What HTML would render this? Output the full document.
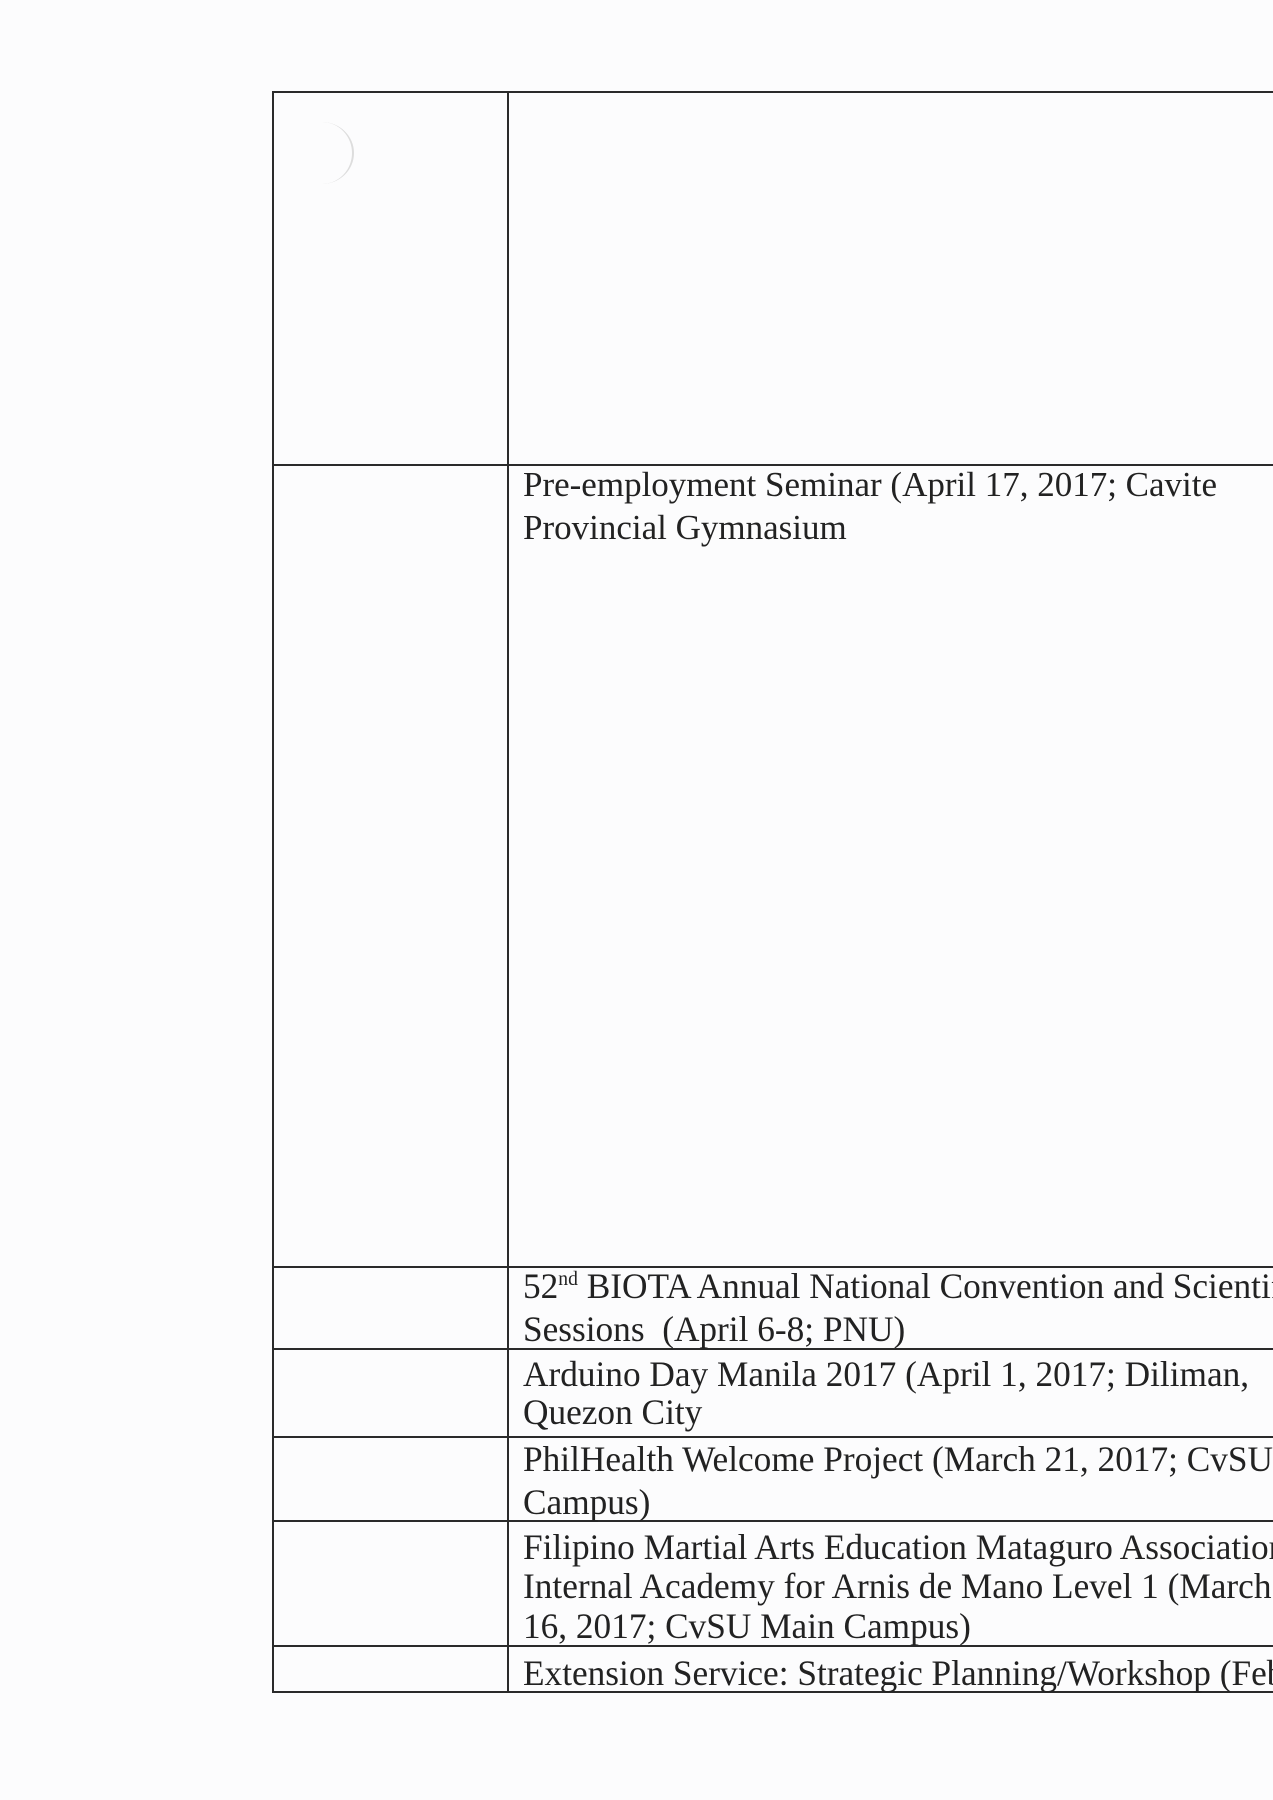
<!DOCTYPE html>
<html><head><meta charset="utf-8"><style>
html,body{margin:0;padding:0;width:1273px;height:1800px;background:#fcfcfd;overflow:hidden;position:relative;font-family:"Liberation Serif",serif;color:#222;}
.h{position:absolute;left:272px;width:1010px;height:2px;background:#2a2a2a;}
.v{position:absolute;width:2px;background:#2a2a2a;}
.t{position:absolute;left:523px;font-size:35px;line-height:40px;white-space:nowrap;}
.c{font-size:36px;transform-origin:left center;transform:scaleX(0.98);}
sup{font-size:20px;line-height:0;}
</style></head><body>
<div class="h" style="top:91px"></div>
<div class="h" style="top:464px"></div>
<div class="h" style="top:1266px"></div>
<div class="h" style="top:1348px"></div>
<div class="h" style="top:1436px"></div>
<div class="h" style="top:1520px"></div>
<div class="h" style="top:1645px"></div>
<div class="h" style="top:1691px"></div>
<div class="v" style="left:272px;top:91px;height:1602px"></div>
<div class="v" style="left:507px;top:91px;height:1602px"></div>
<div style="position:absolute;left:290px;top:122px;width:62px;height:62px;border-radius:50%;border-right:2px solid #ddd;"></div>

<div class="t" style="top:465px">Pre-employment Seminar (April 17, 2017; Cavite</div>
<div class="t" style="top:508px">Provincial Gymnasium</div>

<div class="t c" style="top:1266px">52<sup>nd</sup> BIOTA Annual National Convention and Scientific</div>
<div class="t c" style="top:1309px">Sessions &nbsp;(April 6-8; PNU)</div>
<div class="t c" style="top:1354px">Arduino Day Manila 2017 (April 1, 2017; Diliman,</div>
<div class="t c" style="top:1392px">Quezon City</div>
<div class="t c" style="top:1439px">PhilHealth Welcome Project (March 21, 2017; CvSU Main</div>
<div class="t c" style="top:1482px">Campus)</div>
<div class="t c" style="top:1527px">Filipino Martial Arts Education Mataguro Association</div>
<div class="t c" style="top:1566px">Internal Academy for Arnis de Mano Level 1 (March</div>
<div class="t c" style="top:1606px">16, 2017; CvSU Main Campus)</div>
<div class="t c" style="top:1653px">Extension Service: Strategic Planning/Workshop (Feb</div>
</body></html>
